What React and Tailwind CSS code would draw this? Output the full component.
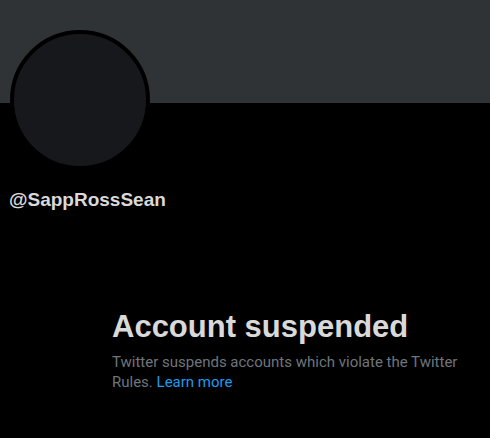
import React from 'react';

const App = () => {
  return (
    <div className="w-[490px] h-[438px] bg-black overflow-hidden" style={{ fontFamily: '"Liberation Sans", Arial, sans-serif' }}>
      <div className="h-[103px] bg-[#2f3336]" />
      <div className="ml-[10px] -mt-[73px] w-[140px] h-[140px] rounded-full border-[4px] border-black bg-[#16181c]" />
      <div className="mt-[18px] ml-[9px] text-[19px] leading-[24px] font-bold text-[#d9d9d9]">@SappRossSean</div>
      <div className="ml-[112px] mt-[97px] w-[360px]">
        <h2 className="text-[31px] leading-[36px] font-bold text-[#d9d9d9]">Account suspended</h2>
        <p className="mt-[7px] text-[15px] leading-[20px] text-[#6e767d] font-['Roboto',sans-serif]">
          Twitter suspends accounts which violate the Twitter Rules.{' '}
          <a href="#" className="text-[#1d9bf0]">Learn more</a>
        </p>
      </div>
    </div>
  );
};

export default App;
